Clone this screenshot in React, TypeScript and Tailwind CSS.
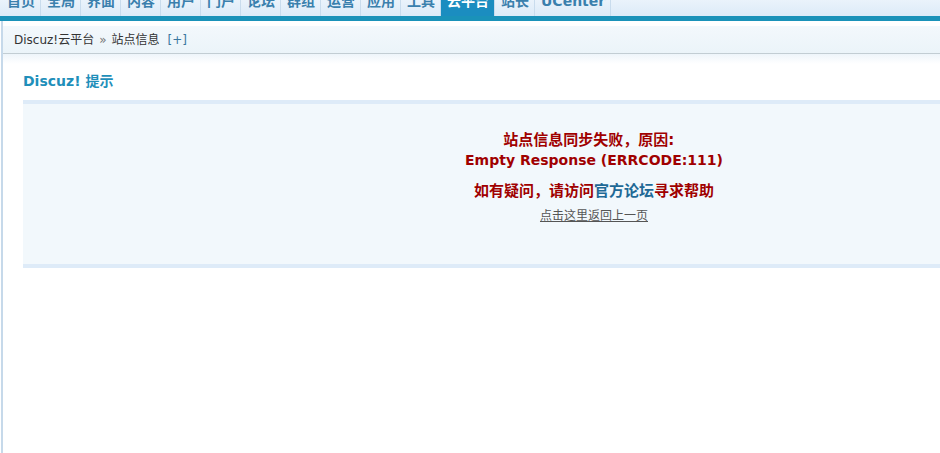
const navItems = ['首页', '全局', '界面', '内容', '用户', '门户', '论坛', '群组', '运营', '应用', '工具', '云平台', '站长', 'UCenter'];

const cjk = { fontFamily: '"DejaVu Sans", "Noto Sans CJK SC", sans-serif' };

export default function App() {
    return (
        <div className="h-[453px] w-full overflow-hidden bg-white" style={cjk}>
            {/* top nav, scrolled so only the lower half shows */}
            <div className="h-[16px] overflow-hidden bg-gradient-to-b from-[#eaf3fb] to-[#dcebf8] w-[1200px]">
                <div className="flex h-[30px] -mt-[14px] pl-[1px]">
                    {navItems.map((item) => (
                        <div
                            key={item}
                            className={`h-[30px] leading-[30px] pl-[6px] pr-[5px] text-[14px] font-bold border-r border-[#c9dced] ${
                                item === '云平台' ? 'bg-[#1b8dc0] text-white' : 'text-[#3a80ad]'
                            }`}
                        >
                            {item}
                        </div>
                    ))}
                </div>
            </div>
            <div className="h-[5px] bg-[#1a92b9]" />

            <div className="ml-[1px] border-l-2 border-[#c6d9ea] h-full">
                <div className="h-[5px] bg-white" />
                {/* breadcrumb */}
                <div className="h-[28px] flex items-center pl-[11px] text-[12px] text-[#333] bg-gradient-to-b from-[#f3f8fc] to-[#ebf4f9] border-b border-[#c2cdd3]">
                    <span>Discuz!云平台</span>
                    <span className="mx-[5px] text-[#777]">»</span>
                    <span>站点信息</span>
                    <span className="ml-[8px] text-[#3a78a0]">[+]</span>
                </div>
                <div className="h-[10px] bg-gradient-to-b from-[#eef5fa] to-white" />

                <div className="pl-[20px] pt-[7px]">
                    <h3 className="text-[14px] leading-[20px] font-bold text-[#1f8fba]">Discuz! 提示</h3>
                    <div className="mt-[9px] w-[1142px] bg-[#f2f8fc] border-t-4 border-b-4 border-[#deebf8] h-[168px] pt-[26px] text-center">
                        <div className="leading-[19px] font-bold text-[#a00000]">
                            <span className="text-[15px]">站点信息同步失败，原因:&nbsp;&nbsp;</span>
                            <br />
                            <span className="text-[14px]">Empty Response (ERRCODE:111)</span>
                        </div>
                        <div className="mt-[12px] text-[15px] leading-[19px] font-bold text-[#a00000]">
                            如有疑问，请访问<span className="text-[#1f6996]">官方论坛</span>寻求帮助
                        </div>
                        <div className="mt-[6px] text-[12px] leading-[18px]">
                            <span className="underline text-[#555]">点击这里返回上一页</span>
                        </div>
                    </div>
                </div>
            </div>
        </div>
    );
}
